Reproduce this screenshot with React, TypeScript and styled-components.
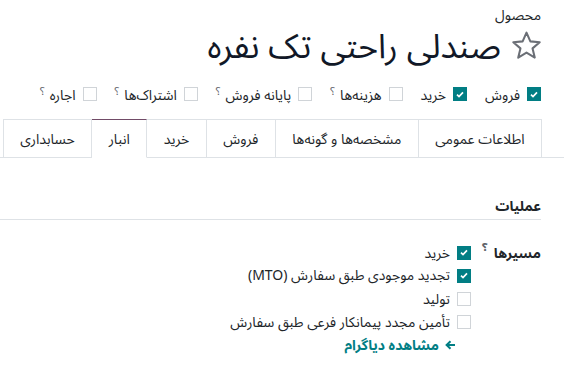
import React from 'react';
import styled, { createGlobalStyle } from 'styled-components';

const teal = '#017e84';

const GlobalStyle = createGlobalStyle`
  html, body {
    margin: 0;
    padding: 0;
    background: #fff;
  }
  body {
    font-family: "Noto Sans Arabic UI", "Noto Sans Arabic", Roboto, "Noto Sans", "DejaVu Sans", sans-serif;
    color: #212529;
    font-size: 14px;
  }
`;

const Sheet = styled.div`
  direction: rtl;
  width: 564px;
  height: 368px;
  overflow: hidden;
  padding-top: 6px;
`;

const Header = styled.div`
  padding: 0 23px 0 0;
`;

const SubLabel = styled.div`
  font-size: 14px;
  line-height: 18px;
`;

const TitleRow = styled.div`
  display: flex;
  align-items: center;
  gap: 9px;
  height: 42px;
  margin-right: -2px;
`;

const Title = styled.h1`
  margin: 0;
  font-size: 34px;
  font-weight: 400;
  color: #111827;
  line-height: 40px;
`;

const Options = styled.div`
  display: flex;
  align-items: center;
  gap: 18px;
  margin-top: 17px;
  height: 22px;
`;

const Option = styled.label`
  display: flex;
  align-items: center;
  gap: 7px;
`;

const Box = styled.span<{ $checked?: boolean }>`
  width: 14px;
  height: 14px;
  box-sizing: border-box;
  border: 1px solid ${(p) => (p.$checked ? teal : '#d0d4d8')};
  background: ${(p) => (p.$checked ? teal : '#fff')};
  display: inline-flex;
  align-items: center;
  justify-content: center;
  flex: none;
`;

const Help = styled.sup`
  font-size: 11px;
  color: #5f636a;
  margin-right: -2px;
  align-self: flex-start;
  line-height: 12px;
`;

const Tabs = styled.div`
  display: flex;
  margin-top: 14px;
  padding-right: 22px;
  border-bottom: 1px solid #dee2e6;
  height: 38px;
`;

const Tab = styled.div<{ $active?: boolean }>`
  flex: none;
  white-space: nowrap;
  padding: 0 16.5px;
  display: flex;
  align-items: center;
  border: 1px solid #dee2e6;
  border-left-width: 0;
  border-top-color: ${(p) => (p.$active ? '#714b67' : '#dee2e6')};
  border-bottom: ${(p) => (p.$active ? '1px solid #fff' : '0')};
  margin-bottom: ${(p) => (p.$active ? '-1px' : '0')};
  background: #fff;
  color: #212529;
  &:last-child {
    border-left-width: 1px;
  }
`;

const Section = styled.div`
  margin-top: 38px;
  margin-right: 23px;
  border-bottom: 1px solid #dee2e6;
  padding-bottom: 3px;
`;

const SectionTitle = styled.div`
  font-weight: 700;
  line-height: 20px;
`;

const FieldGrid = styled.div`
  display: grid;
  grid-template-columns: 70px auto;
  padding-right: 23px;
  margin-top: 21px;
`;

const FieldLabel = styled.div`
  font-weight: 700;
  line-height: 23px;
  display: flex;
  align-items: flex-start;
  gap: 8px;
`;

const RouteList = styled.div`
  display: flex;
  flex-direction: column;
`;

const RouteRow = styled.label`
  display: flex;
  align-items: center;
  gap: 7px;
  height: 23px;
`;

const DiagramLink = styled.a`
  display: flex;
  align-items: center;
  gap: 6px;
  color: ${teal};
  font-weight: 700;
  margin-right: 15px;
  height: 23px;
  text-decoration: none;
`;

const Check = ({ checked }: { checked?: boolean }) => (
  <Box $checked={checked}>
    {checked && (
      <svg width="8" height="7" viewBox="0 0 8 7">
        <path d="M1 3.6 L3 5.5 L7 1.3" fill="none" stroke="#fff" strokeWidth="1.7" />
      </svg>
    )}
  </Box>
);

const Star = () => (
  <svg width="33" height="33" viewBox="0 0 24 24">
    <path
      d="M12 2.6 L14.8 9 L21.6 9.6 L16.4 14.1 L18 20.8 L12 17.2 L6 20.8 L7.6 14.1 L2.4 9.6 L9.2 9 Z"
      fill="none"
      stroke="#6b6f76"
      strokeWidth="1.5"
      strokeLinejoin="round"
    />
  </svg>
);

const Arrow = () => (
  <svg width="11" height="10" viewBox="0 0 11 10">
    <path d="M10 5 H2 M5.5 1.2 L1.6 5 L5.5 8.8" fill="none" stroke={teal} strokeWidth="2" />
  </svg>
);

const options = [
  { label: 'فروش', checked: true },
  { label: 'خرید', checked: true },
  { label: 'هزینه‌ها', help: true },
  { label: 'پایانه فروش', help: true },
  { label: 'اشتراک‌ها', help: true },
  { label: 'اجاره', help: true },
];

const tabs = ['اطلاعات عمومی', 'مشخصه‌ها و گونه‌ها', 'فروش', 'خرید', 'انبار', 'حسابداری'];

const routes = [
  { label: 'خرید', checked: true },
  { label: 'تجدید موجودی طبق سفارش (MTO)', checked: true },
  { label: 'تولید' },
  { label: 'تأمین مجدد پیمانکار فرعی طبق سفارش' },
];

export default function App() {
  return (
    <Sheet>
      <GlobalStyle />
      <Header>
        <SubLabel>محصول</SubLabel>
        <TitleRow>
          <Star />
          <Title>صندلی راحتی تک نفره</Title>
        </TitleRow>
        <Options>
          {options.map((o) => (
            <Option key={o.label}>
              <Check checked={o.checked} />
              <span>{o.label}</span>
              {o.help && <Help>؟</Help>}
            </Option>
          ))}
        </Options>
      </Header>
      <Tabs>
        {tabs.map((t) => (
          <Tab key={t} $active={t === 'انبار'}>
            {t}
          </Tab>
        ))}
      </Tabs>
      <Section>
        <SectionTitle>عملیات</SectionTitle>
      </Section>
      <FieldGrid>
        <FieldLabel>
          <span>مسیرها</span>
          <Help>؟</Help>
        </FieldLabel>
        <RouteList>
          {routes.map((r) => (
            <RouteRow key={r.label}>
              <Check checked={r.checked} />
              <span>{r.label}</span>
            </RouteRow>
          ))}
          <DiagramLink href="#">
            <Arrow />
            <span>مشاهده دیاگرام</span>
          </DiagramLink>
        </RouteList>
      </FieldGrid>
    </Sheet>
  );
}
